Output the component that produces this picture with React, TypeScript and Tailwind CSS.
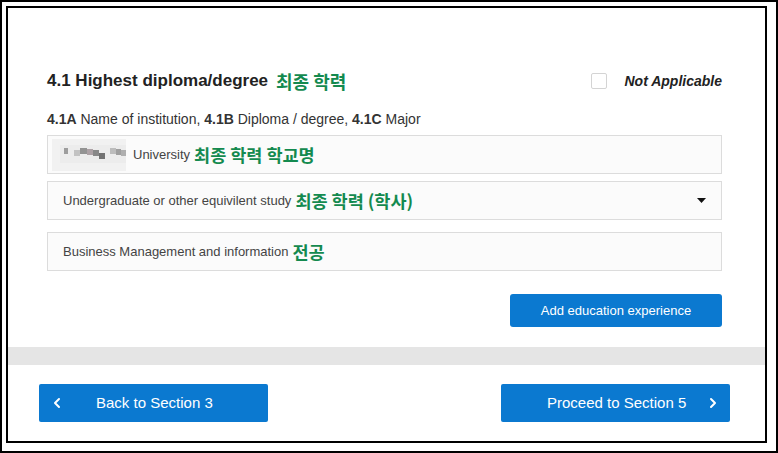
import { ChevronLeft, ChevronRight } from "lucide-react";

const GREEN = "text-[#148a4f]";

// pixelated blur that hides the school name in the screenshot
function BlurredName() {
  const blocks = [
    [12, 9, 4, "#8a8a8a"],
    [22, 11, 6, "#b8b8b8"],
    [28, 9, 7, "#7d7d7d"],
    [35, 10, 6, "#9c8f94"],
    [41, 11, 6, "#6f6f6f"],
    [47, 14, 6, "#545454"],
    [58, 9, 6, "#b0b0b0"],
    [64, 10, 5, "#8c8c8c"],
    [69, 11, 5, "#a0a0a0"],
  ] as const;
  return (
    <svg width="74" height="32" viewBox="0 0 74 32" className="-ml-[11px] shrink-0">
      <rect x="0" y="0" width="74" height="32" fill="#f1f1f1" />
      <rect x="8" y="6" width="66" height="18" fill="#ececec" />
      {blocks.map(([x, y, w, c], i) => (
        <rect key={i} x={x} y={y} width={w} height="6" fill={c} opacity={0.8} />
      ))}
    </svg>
  );
}

function Field({ children, select = false }: { children: React.ReactNode; select?: boolean }) {
  return (
    <div className="flex h-[39px] items-center border border-[#dcdcdc] bg-[#fbfbfb] pl-[15px] pr-[14px] text-[13px] text-[#444]">
      <div className="flex min-w-0 flex-1 items-center gap-[4px]">{children}</div>
      {select && (
        <svg width="9" height="5" viewBox="0 0 9 5" className="mr-[1px]">
          <path d="M0 0h9L4.5 5z" fill="#111" />
        </svg>
      )}
    </div>
  );
}

function Ko({ children, big = false }: { children: React.ReactNode; big?: boolean }) {
  return (
    <span
      className={`font-['Noto_Sans_CJK_KR',sans-serif] font-bold leading-none ${GREEN} ${
        big ? "text-[18px]" : "text-[17.5px]"
      }`}
    >
      {children}
    </span>
  );
}

export default function App() {
  return (
    <div className="h-[453px] w-[778px] border-2 border-black bg-white pl-[4px] pt-[4px] font-['Liberation_Sans',Arial,sans-serif]">
      <div className="flex h-[437px] w-[761px] flex-col border-2 border-black">
        <section className="pl-[39px] pr-[43px] pt-[61px]">
          <div className="flex h-[24px] items-center justify-between">
            <h2 className="flex items-center gap-[8px] text-[17px] font-bold text-[#222]">
              4.1 Highest diploma/degree
              <Ko big>최종 학력</Ko>
            </h2>
            <label className="flex items-center gap-[18px]">
              <span className="h-[16px] w-[16px] rounded-[2px] border border-[#d4d4d4] bg-white" />
              <span className="text-[14px] font-bold italic text-[#222]">Not Applicable</span>
            </label>
          </div>

          <p className="mt-[17px] h-[18px] text-[14px] leading-[18px] text-[#333]">
            <b>4.1A</b> Name of institution, <b>4.1B</b> Diploma / degree, <b>4.1C</b> Major
          </p>

          <div className="mt-[7px]">
            <Field>
              <BlurredName />
              <span className="ml-[3px]">University</span>
              <Ko>최종 학력 학교명</Ko>
            </Field>
          </div>
          <div className="mt-[7px]">
            <Field select>
              <span>Undergraduate or other equivilent study</span>
              <Ko>최종 학력 (학사)</Ko>
            </Field>
          </div>
          <div className="mt-[12px]">
            <Field>
              <span>Business Management and information</span>
              <Ko>전공</Ko>
            </Field>
          </div>

          <div className="mt-[23px] flex justify-end">
            <button
              type="button"
              className="h-[33px] w-[212px] rounded-[3px] bg-[#0b79d0] text-[13px] text-white"
            >
              Add education experience
            </button>
          </div>
        </section>

        <div className="mt-[20px] h-[18px] bg-[#e5e5e5]" />

        <div className="mt-[19px] flex justify-between pl-[31px] pr-[35px]">
          <button
            type="button"
            className="flex h-[38px] w-[229px] items-center rounded-[2px] bg-[#0b79d0] pl-[10px] text-[15px] text-white"
          >
            <ChevronLeft size={16} strokeWidth={3} />
            <span className="ml-[31px]">Back to Section 3</span>
          </button>
          <button
            type="button"
            className="flex h-[38px] w-[229px] items-center rounded-[2px] bg-[#0b79d0] pl-[46px] text-[15px] text-white"
          >
            <span>Proceed to Section 5</span>
            <ChevronRight size={16} strokeWidth={3} className="ml-auto mr-[9px]" />
          </button>
        </div>
      </div>
    </div>
  );
}
